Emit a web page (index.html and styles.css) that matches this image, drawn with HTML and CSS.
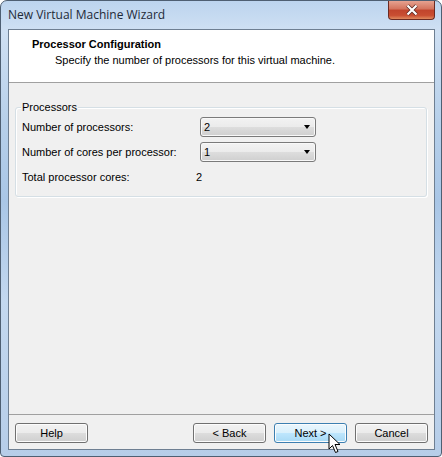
FILE: index.html
```html
<!DOCTYPE html>
<html>
    <head>
        <meta charset="utf-8" />
        <title>New Virtual Machine Wizard</title>
        <link rel="stylesheet" href="styles.css">
    </head>
    <body>
        <div class="window">
            <div class="titlebar">
                <span class="title">New Virtual Machine Wizard</span>
                <div class="close-btn">
                    <svg width="14" height="12" viewBox="0 0 14 12">
                        <path d="M2.5 1.5 L11.5 10.5 M11.5 1.5 L2.5 10.5" stroke="#5a2a24" stroke-width="3.8" />
                        <path d="M2.5 1.5 L11.5 10.5 M11.5 1.5 L2.5 10.5" stroke="#fff" stroke-width="2.2" />
                    </svg>
                </div>
            </div>
            <div class="client">
                <div class="header">
                    <div class="header-title">Processor Configuration</div>
                    <div class="header-sub">Specify the number of processors for this virtual machine.</div>
                </div>
                <div class="body">
                    <div class="group">
                        <span class="legend">Processors</span>
                        <div class="row">
                            <span class="label">Number of processors:</span>
                            <div class="combo"><span>2</span><i class="arrow"></i></div>
                        </div>
                        <div class="row">
                            <span class="label">Number of cores per processor:</span>
                            <div class="combo"><span>1</span><i class="arrow"></i></div>
                        </div>
                        <div class="row">
                            <span class="label short">Total processor cores:</span>
                            <span class="value">2</span>
                        </div>
                    </div>
                </div>
                <div class="footer">
                    <div class="btn">Help</div>
                    <div class="spacer"></div>
                    <div class="btn">&lt; Back</div>
                    <div class="btn hot">Next &gt;
                        <svg class="cursor" width="14" height="22" viewBox="0 0 14 22">
                            <path d="M1 1 L1 16 L4.5 12.5 L7.5 19.5 L10 18.5 L7 11.5 L12 11.5 Z" fill="#fff" stroke="#000" stroke-width="1" stroke-linejoin="round" />
                        </svg>
                    </div>
                    <div class="btn">Cancel</div>
                </div>
            </div>
        </div>
    </body>
</html>
```
FILE: styles.css
```css
body {
    margin: 0;
    width: 442px;
    height: 457px;
    font-family: "Liberation Sans", Arial, sans-serif;
    font-size: 11px;
    color: #000;
    background: #fff;
}

.window {
    box-sizing: border-box;
    width: 442px;
    height: 457px;
    border: 1px solid #4e5f72;
    border-radius: 7px 7px 4px 4px;
    background: linear-gradient(to bottom, #bcd4ee 0, #cfe0f3 30px, #b7d0ea 120px, #a9c6e6 200px, #c3d8ef 300px, #b6cde8 457px);
    display: flex;
    flex-direction: column;
}

.titlebar {
    height: 27px;
    display: flex;
    align-items: flex-start;
    padding: 0 6px 0 7px;
}

.title {
    margin-top: 5px;
    font-family: "Open Sans", "Noto Sans", sans-serif;
    font-size: 12px;
    color: #1e2a38;
    flex: 1;
}

.close-btn {
    width: 47px;
    height: 19px;
    box-sizing: border-box;
    border: 1px solid #6b2a22;
    border-top: none;
    border-radius: 0 0 4px 4px;
    background: linear-gradient(to bottom, #e6a290 0, #d3725c 45%, #c1442c 50%, #c94e32 80%, #e08a5e 100%);
    display: flex;
    align-items: center;
    justify-content: center;
}

.client {
    flex: 1;
    margin: 1px 6px 6px 7px;
    border: 1px solid #6e7f92;
    background: #f0f0f0;
    display: flex;
    flex-direction: column;
}

.header {
    height: 53px;
    background: #fff;
    border-bottom: 1px solid #a0a0a0;
    padding-left: 23px;
    box-sizing: border-box;
}

.header-title {
    font-weight: bold;
    margin-top: 6px;
    line-height: 16px;
}

.header-sub {
    padding-left: 23px;
    line-height: 16px;
}

.body {
    flex: 1;
    padding: 24px 7px 0 6px;
}

.group {
    height: 90px;
    box-sizing: border-box;
    border: 1px solid #d5dfe5;
    border-radius: 3px;
    padding: 0 6px;
    box-shadow: inset 1px 1px 0 #fff, 1px 1px 0 #fff;
    display: flex;
    flex-direction: column;
    gap: 5px;
}

.legend {
    align-self: flex-start;
    margin: -7px 0 -2px -1px;
    padding: 0 1px;
    line-height: 13px;
    background: #f0f0f0;
}

.row {
    display: flex;
    align-items: center;
    height: 20px;
    white-space: nowrap;
}

.label {
    width: 178px;
}

.label.short {
    width: 174px;
}

.combo {
    width: 116px;
    height: 20px;
    box-sizing: border-box;
    border: 1px solid #7a7a7a;
    border-radius: 3px;
    background: linear-gradient(to bottom, #f2f2f2 0, #ebebeb 50%, #dddddd 51%, #cfcfcf 100%);
    box-shadow: inset 0 0 0 1px #f8f8f8;
    display: flex;
    align-items: center;
    padding: 0 5px 0 3px;
}

.combo span {
    flex: 1;
}

.arrow {
    width: 0;
    height: 0;
    border-left: 3.5px solid transparent;
    border-right: 3.5px solid transparent;
    border-top: 4px solid #000;
}

.footer {
    height: 35px;
    box-sizing: border-box;
    border-top: 1px solid #a0a0a0;
    display: flex;
    align-items: flex-start;
    padding: 8px 6px 0 6px;
    gap: 8px;
}

.spacer {
    flex: 1;
}

.btn {
    position: relative;
    width: 73px;
    height: 20px;
    box-sizing: border-box;
    border: 1px solid #707070;
    border-radius: 3px;
    background: linear-gradient(to bottom, #f2f2f2 0, #ebebeb 50%, #dddddd 51%, #cfcfcf 100%);
    box-shadow: inset 0 0 0 1px #fcfcfc;
    display: flex;
    align-items: center;
    justify-content: center;
    line-height: 18px;
}

.btn.hot {
    border-color: #3c7fb1;
    background: linear-gradient(to bottom, #eaf6fd 0, #d9f0fc 50%, #bee6fd 51%, #a7d9f5 100%);
}

.cursor {
    position: absolute;
    left: 53px;
    top: 9px;
}
```
